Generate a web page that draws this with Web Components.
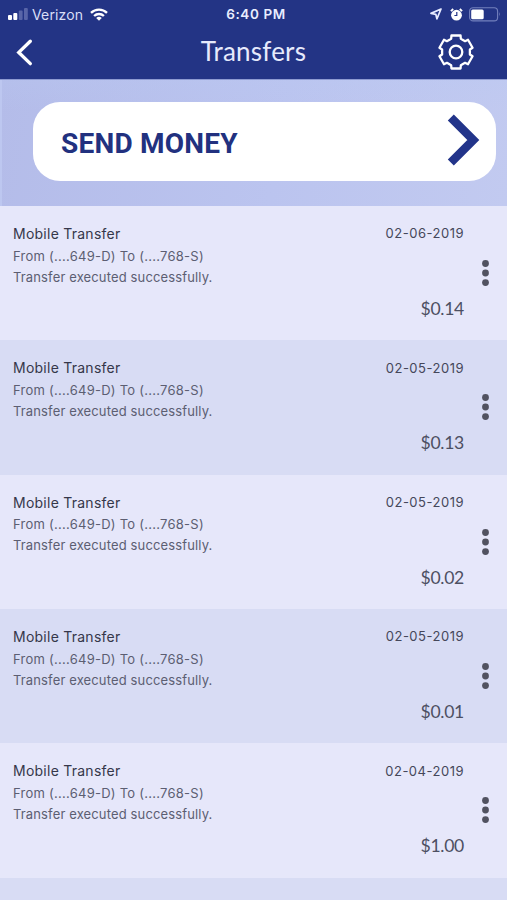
<!DOCTYPE html>
<html lang="en">
<head>
<meta charset="utf-8">
<title>Transfers</title>
<style>
html, body { margin: 0; height: 100%; }
body { overflow: hidden; font-family: Inter, "Liberation Sans", sans-serif; background: #d8dcf4; }
</style>
</head>
<body>
<transfers-app></transfers-app>
<script>
class StatusBar extends HTMLElement {
  constructor() {
    super();
    this.attachShadow({ mode: 'open' }).innerHTML = `
      <style>
        :host { display: grid; grid-template-columns: 1fr auto 1fr; align-items: center; height: 27px; padding: 0 6px 0 8px; color: #d9dff8; box-sizing: border-box; }
        .side { display: flex; align-items: center; }
        .right { justify-content: flex-end; }
        .carrier { font-size: 14px; line-height: 27px; margin: 0 7px 0 4px; letter-spacing: .15px; }
        .time { font-size: 13.5px; font-weight: 600; line-height: 27px; letter-spacing: .6px; padding: 1px 0 0 3px; color: #e9edff; }
        svg { display: block; }
      </style>
      <div class="side">
        <svg width="20" height="12" viewBox="0 0 20 12"><rect y="7" width="4" height="5" rx="1" fill="#fff"/><rect x="5.3" y="5" width="4" height="7" rx="1" fill="#fff"/><rect x="10.8" y="2.5" width="3.8" height="9.5" rx="1" fill="#5865a8"/><rect x="16" y="0" width="3.8" height="12" rx="1" fill="#5865a8"/></svg>
        <span class="carrier">Verizon</span>
        <svg width="18" height="13" viewBox="0 0 18 13" fill="none" stroke="#fff" stroke-width="2.3"><path d="M1 4.9C5.4.5 12.6.5 17 4.9M4.1 8C6.8 5.3 11.2 5.3 13.9 8"/><path d="M9 12.8L6.2 10Q9 7.7 11.8 10Z" fill="#fff" stroke="none"/></svg>
      </div>
      <span class="time">6:40 PM</span>
      <div class="side right">
        <svg width="12" height="12" viewBox="0 0 12 12" fill="none" stroke="#e8ecff" stroke-width="1.7" stroke-linejoin="round"><path d="M11 1L1 5.4L5.8 6.3L6.9 10.8Z"/></svg>
        <svg style="margin:0 6px 0 8px" width="13" height="13" viewBox="0 0 13 13"><circle cx="6.5" cy="7.2" r="5.4" fill="#fff"/><path d="M.9 3.2L3.2 1M12.1 3.2L9.8 1" stroke="#fff" stroke-width="1.8"/><path d="M6.8 4V7.5H4.4" fill="none" stroke="#233485" stroke-width="1.2"/></svg>
        <svg width="32" height="15" viewBox="0 0 32 15"><rect x=".6" y=".7" width="28" height="13.2" rx="3.5" fill="none" stroke="#7380bd" stroke-width="1.1"/><rect x="2.2" y="2.4" width="12.5" height="9.8" rx="1.5" fill="#fff"/><path d="M30 5Q31.8 7.3 30 9.6Z" fill="#7380bd"/></svg>
      </div>`;
  }
}
customElements.define('status-bar', StatusBar);

class NavBar extends HTMLElement {
  constructor() {
    super();
    // Gear outline: six teeth, each flaring slightly at its base.
    const teeth = [];
    for (let i = 0; i < 6; i++) {
      for (const [offset, radius] of [[-20, 14.1], [-15.5, 17.1], [15.5, 17.1], [20, 14.1]]) {
        const angle = (i * 60 + offset - 90) * Math.PI / 180;
        teeth.push((20 + radius * Math.cos(angle)).toFixed(2) + ',' + (20 + radius * Math.sin(angle)).toFixed(2));
      }
    }
    this.attachShadow({ mode: 'open' }).innerHTML = `
      <style>
        :host { display: grid; grid-template-columns: 40px 1fr 40px; align-items: center; height: 50px; padding: 0 31px 0 5px; color: #e6eafc; }
        h1 { margin: -2px 0 0; text-align: center; font: 400 26px/50px Lato, sans-serif; letter-spacing: .2px; padding-left: 26px; }
        svg { display: block; }
      </style>
      <svg width="40" height="40" viewBox="0 0 40 40" fill="none" stroke="#fff" stroke-width="3.4" stroke-linecap="round" stroke-linejoin="miter"><path d="M25.3 9.2L13.8 20.4L25.3 31.6"/></svg>
      <h1><slot></slot></h1>
      <svg width="40" height="40" viewBox="0 0 40 40" fill="none" stroke="#fff" stroke-width="2.3" stroke-linejoin="round"><polygon points="${teeth.join(' ')}"/><circle cx="20" cy="20" r="6.3"/></svg>`;
  }
}
customElements.define('nav-bar', NavBar);

class SendMoney extends HTMLElement {
  constructor() {
    super();
    this.attachShadow({ mode: 'open' }).innerHTML = `
      <style>
        :host { display: block; box-sizing: border-box; height: 127px; padding: 22px 11px 0 33px; background: linear-gradient(90deg, #bdc7f0 2px, transparent 2px), linear-gradient(#b9c9f340, transparent 25%), linear-gradient(100deg, #b4bce9 0, #bbc4ef 55%, #c2caf0 100%); border-top: 1px solid #8d9ad1; }
        button { display: flex; justify-content: space-between; align-items: center; box-sizing: border-box; width: 100%; height: 79px; padding: 5px 16px 0 28px; border: 0; border-radius: 27px; background: #fff; color: #22317f; font: 700 28px/40px Roboto, Inter, sans-serif; letter-spacing: .22px; text-align: left; }
        svg { display: block; margin-top: -9px; }
      </style>
      <button><span><slot></slot></span><svg width="33" height="52" viewBox="0 0 33 52" fill="none" stroke="#22348a" stroke-width="8.5"><path d="M3.8 3.5L26.3 26L3.8 48.5"/></svg></button>`;
  }
}
customElements.define('send-money', SendMoney);

class TransferRow extends HTMLElement {
  constructor() {
    super();
    this.attachShadow({ mode: 'open' }).innerHTML = `
      <style>
        :host { display: grid; grid-template-columns: 1fr auto 11px; column-gap: 16px; box-sizing: border-box; height: 134.35px; padding: 17px 16px 0 13px; background: #e6e7fa; color: #5c5e72; }
        :host(:nth-child(even)) { background: #d8dcf4; }
        .info { display: flex; flex-direction: column; font-size: 13px; line-height: 21.3px; letter-spacing: .25px; }
        .name { font-size: 14px; line-height: 22.5px; color: #35374a; }
        .state { letter-spacing: .14px; }
        .meta { display: flex; flex-direction: column; align-items: flex-end; gap: 53.6px; }
        .date { font-size: 13px; line-height: 22px; letter-spacing: .5px; color: #45475a; margin-top: -.6px; }
        .amount { font: 400 17.6px/22px Lato, sans-serif; letter-spacing: -.3px; color: #4d4f62; }
        svg { display: block; margin-top: 35px; }
      </style>
      <div class="info"><span class="name">Mobile Transfer</span><span class="route">From (....649-D) To (....768-S)</span><span class="state">Transfer executed successfully.</span></div>
      <div class="meta"><span class="date"><slot name="date"></slot></span><span class="amount"><slot name="amount"></slot></span></div>
      <svg width="11" height="30" viewBox="0 0 11 30" fill="#515260"><circle cx="5.5" cy="5.5" r="3.4"/><circle cx="5.5" cy="15" r="3.4"/><circle cx="5.5" cy="24.6" r="3.4"/></svg>`;
  }
}
customElements.define('transfer-row', TransferRow);

class TransfersApp extends HTMLElement {
  constructor() {
    super();
    const rows = [['02-06-2019', '$0.14'], ['02-05-2019', '$0.13'], ['02-05-2019', '$0.02'], ['02-05-2019', '$0.01'], ['02-04-2019', '$1.00']];
    this.attachShadow({ mode: 'open' }).innerHTML = `
      <style>
        :host { display: flex; flex-direction: column; height: 900px; }
        header { flex: none; height: 79px; background: #233485; }
        main { flex: none; }
      </style>
      <header><status-bar></status-bar><nav-bar>Transfers</nav-bar></header>
      <send-money>SEND MONEY</send-money>
      <main>${rows.map(([date, amount]) => `<transfer-row><span slot="date">${date}</span><span slot="amount">${amount}</span></transfer-row>`).join('')}</main>`;
  }
}
customElements.define('transfers-app', TransfersApp);
</script>
</body>
</html>
